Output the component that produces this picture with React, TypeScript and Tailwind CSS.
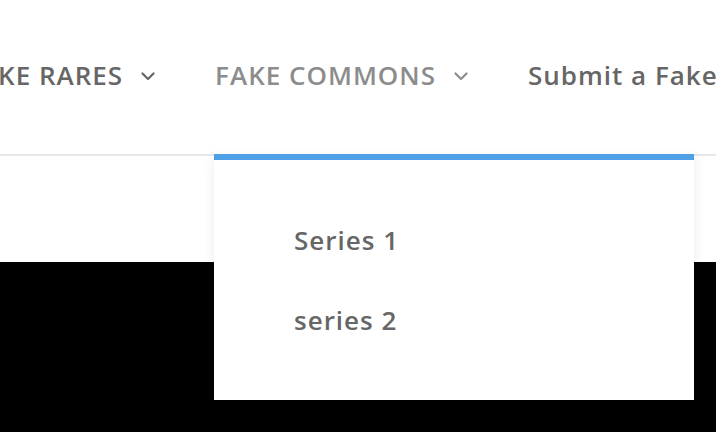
import React from "react";

function Chevron() {
  return (
    <svg width="14" height="9" viewBox="0 0 14 9" fill="none" className="ml-[18px] mt-[2px]">
      <path d="M1.5 1.5 L7 7 L12.5 1.5" stroke="currentColor" strokeWidth="2.2" strokeLinecap="round" strokeLinejoin="round" />
    </svg>
  );
}

export default function App() {
  return (
    <div className="w-[716px] h-[432px] overflow-hidden bg-white flex flex-col font-['Open_Sans',sans-serif]">
      <header className="relative h-[156px] shrink-0 border-b-2 border-[#e8e8e8] flex items-center">
        <nav className="flex items-center ml-[-35px] whitespace-nowrap text-[26px] tracking-[1px] font-semibold leading-none pb-[4px]">
          <div className="flex items-center text-[#666666]">
            <span>FAKE RARES</span>
            <Chevron />
          </div>
          <div className="relative flex items-center ml-[60px] text-[#8c8c8c]">
            <span>FAKE COMMONS</span>
            <Chevron />
          </div>
          <div className="flex items-center ml-[60px] text-[#666666]">
            <span>Submit a Fake</span>
          </div>
        </nav>
        <div className="absolute left-[214px] top-[154px] w-[480px] z-10 bg-white border-t-[6px] border-[#4f9ee8] shadow-[0_3px_12px_rgba(0,0,0,0.08)] py-[40px]">
          <div className="h-[80px] flex items-center pl-[80px] text-[26px] tracking-[1px] font-semibold text-[#666666]">Series 1</div>
          <div className="h-[80px] flex items-center pl-[80px] text-[26px] tracking-[1px] font-semibold text-[#666666]">series 2</div>
        </div>
      </header>
      <div className="h-[106px] shrink-0 bg-white" />
      <div className="flex-1 bg-black" />
    </div>
  );
}
